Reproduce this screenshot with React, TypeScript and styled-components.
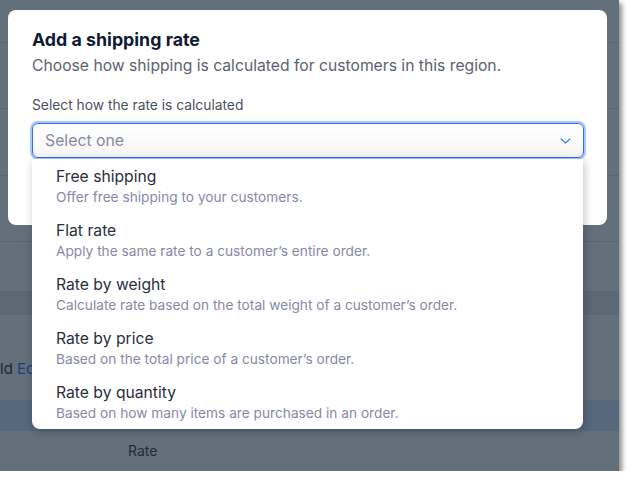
import React from "react";
import styled, { createGlobalStyle } from "styled-components";

const GlobalStyle = createGlobalStyle`
  html, body {
    margin: 0;
    padding: 0;
    background: #ffffff;
  }
  body {
    font-family: Inter, "Noto Sans", sans-serif;
  }
`;

const options = [
  { title: "Free shipping", desc: "Offer free shipping to your customers." },
  { title: "Flat rate", desc: "Apply the same rate to a customer\u2019s entire order." },
  { title: "Rate by weight", desc: "Calculate rate based on the total weight of a customer\u2019s order." },
  { title: "Rate by price", desc: "Based on the total price of a customer\u2019s order." },
  { title: "Rate by quantity", desc: "Based on how many items are purchased in an order." },
];

const App = () => {
  return (
    <>
      <GlobalStyle />
      <Screen>
        <Backdrop>
          <Row h={43} />
          <Row h={66} />
          <Row h={67} />
          <Row h={66} />
          <Row h={49} line={false} />
          <Row h={24} tone="#5c6875" line={false} />
          <Row h={85} line={false}>
            <CellText top={45}>
              ld <LinkText>Ec</LinkText>
            </CellText>
          </Row>
          <Row h={31} tone="#57687d" line={false} />
          <Row h={40} line={false}>
            <HeaderCell>Rate</HeaderCell>
          </Row>
        </Backdrop>

        <Modal>
          <Title>Add a shipping rate</Title>
          <Subtitle>Choose how shipping is calculated for customers in this region.</Subtitle>
          <Label>Select how the rate is calculated</Label>
          <SelectWrap>
            <SelectBox>
              <Placeholder>Select one</Placeholder>
              <svg width="11" height="6" viewBox="0 0 11 6" fill="none">
                <path d="M0.8 0.8 L5.5 5 L10.2 0.8" stroke="#3a7af2" strokeWidth="1.3" />
              </svg>
            </SelectBox>
            <Menu>
              {options.map((o) => (
                <Option key={o.title}>
                  <OptionTitle>{o.title}</OptionTitle>
                  <OptionDesc>{o.desc}</OptionDesc>
                </Option>
              ))}
            </Menu>
          </SelectWrap>
        </Modal>
      </Screen>
    </>
  );
};

const Screen = styled.div`
  position: relative;
  width: 619px;
  height: 471px;
  background: #636f7b;
  box-shadow: 3px 3px 5px rgba(0, 0, 0, 0.45);
`;

const Backdrop = styled.div`
  display: flex;
  flex-direction: column;
  height: 100%;
  overflow: hidden;
`;

const Row = styled.div<{ h: number; tone?: string; line?: boolean }>`
  position: relative;
  flex: 0 0 ${({ h }) => h}px;
  background: ${({ tone }) => tone || "#636f7b"};
  border-bottom: ${({ line = true }) => (line ? "1px solid #5a6571" : "none")};
  box-sizing: border-box;
`;

const CellText = styled.div<{ top: number }>`
  padding-top: ${({ top }) => top}px;
  font-size: 15px;
  line-height: 18px;
  color: #1d2733;
`;

const LinkText = styled.span`
  color: #1c3f7a;
`;

const HeaderCell = styled.div`
  padding: 11px 0 0 128px;
  font-size: 14px;
  line-height: 18px;
  color: #1f2b3f;
`;

const Modal = styled.div`
  position: absolute;
  top: 10px;
  left: 8px;
  width: 599px;
  height: 215px;
  box-sizing: border-box;
  padding: 19px 23px 0 24px;
  background: #ffffff;
  border-radius: 8px;
`;

const Title = styled.div`
  font-size: 17.8px;
  font-weight: 700;
  line-height: 22px;
  color: #101a33;
`;

const Subtitle = styled.div`
  margin-top: 3px;
  font-size: 15.7px;
  line-height: 24px;
  color: #5d6172;
`;

const Label = styled.div`
  margin-top: 18px;
  font-size: 13.8px;
  line-height: 18px;
  color: #4a4f5e;
`;

const SelectWrap = styled.div`
  position: relative;
  margin-top: 9px;
`;

const SelectBox = styled.div`
  display: flex;
  align-items: center;
  justify-content: space-between;
  height: 35px;
  box-sizing: border-box;
  padding: 0 12px 0 12px;
  border: 1px solid #2f6fef;
  border-radius: 6px;
  background: linear-gradient(#ffffff, #f6f6f7);
  box-shadow: 0 0 0 2px #a9c8fb;
`;

const Placeholder = styled.span`
  font-size: 15.8px;
  color: #868aa3;
`;

const Menu = styled.div`
  position: absolute;
  top: 36px;
  left: 0;
  right: 1px;
  background: #ffffff;
  border-radius: 0 0 8px 8px;
  box-shadow: 0 4px 10px rgba(0, 0, 0, 0.14), 3px 0 8px rgba(0, 0, 0, 0.1);
  z-index: 2;
`;

const Option = styled.div`
  padding: 8px 24px 6px 24px;
`;

const OptionTitle = styled.div`
  font-size: 15.7px;
  line-height: 20px;
  color: #2a2e3d;
`;

const OptionDesc = styled.div`
  font-size: 13.7px;
  line-height: 20px;
  color: #8788a6;
`;

export default App;
